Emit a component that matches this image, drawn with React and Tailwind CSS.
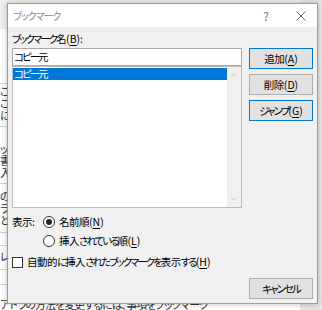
import { ChevronUp, ChevronDown } from 'lucide-react';

const ff = "font-['Noto_Sans_CJK_JP',sans-serif] [font-feature-settings:'palt']";

// かなだけ詰める（Meiryo UI のように仮名が細い）
const J = ({ s, kana = 'tracking-[-2px]', kanji = 'tracking-[-0.5px]' }) => {
    const parts = s.split(/([\u3040-\u30ff]+)/);
    return (
        <>
            {parts.map((p, i) =>
                /[\u3040-\u30ff]/.test(p) ? (
                    <span key={i} className={kana}>{p}</span>
                ) : (
                    <span key={i} className={kanji}>{p}</span>
                )
            )}
        </>
    );
};

const Key = ({ k }) => (
    <>
        (<span className="underline underline-offset-2">{k}</span>)
    </>
);

// 背景のドキュメント（ダイアログの外に少しだけ見える部分）
const docRows = [
    { cls: 'h-[55px]', lines: [] },
    { cls: 'h-[43px] pt-[1px]', lines: ['こ', 'こ', 'に'] },
    { cls: 'h-[57px] pt-[15px]', lines: ['ッ', '書', '入]'] },
    { cls: 'h-[49px] pt-[6px]', lines: ['の', 'ラ', 'と'] },
    { cls: 'h-[13px]', lines: [] },
    { cls: 'h-[24px] pt-[4px]', lines: ['レ'] },
    { cls: 'h-[15px]', lines: [] },
    { cls: 'flex-1 pt-[13px] border-b-0', lines: ['アドラの方法を変更するには、事項をブックマーク'] },
];

const Button = ({ children, primary }) => (
    <div
        className={`w-[64px] h-[21px] flex items-center justify-center text-[10.5px] text-black bg-[#e1e1e1] border ${primary ? 'border-[#0078d7]' : 'border-[#adadad]'}`}
    >
        {children}
    </div>
);

export default function App() {
    return (
        <div className={`relative w-[322px] h-[310px] overflow-hidden bg-[#e6e6e6] ${ff}`}>
            {/* 背景 */}
            <div className="w-[300px] h-full flex flex-col">
                <div className="h-[30px] bg-[#f0f0f0]" />
                <div className="flex-1 bg-white flex flex-col">
                    {docRows.map((row, i) => (
                        <div key={i} className={`${row.cls} border-b border-[#d0d0d0] text-[11px] leading-[12px] text-[#333] overflow-hidden`}>
                            {row.lines.map((t, j) => (
                                <div key={j} className="h-[12px] whitespace-nowrap tracking-[-1px]">{t}</div>
                            ))}
                        </div>
                    ))}
                </div>
            </div>

            {/* ダイアログ */}
            <div className="absolute left-[7px] top-[3px] w-[311px] h-[301px] border border-[#9c9c9c] bg-[#f0f0f0] shadow-[0_0_6px_rgba(0,0,0,0.25)] flex flex-col">
                {/* タイトルバー */}
                <div className="h-[23px] bg-white flex items-center pl-[5px] text-[10px] text-[#8a8a8a]">
                    <span className="flex-1"><J s="ブックマーク" kana="tracking-[-1px]" /></span>
                    <span className="w-[14px] text-center text-[12px] text-[#777]">?</span>
                    <span className="w-[23px]" />
                    <svg width="10" height="10" viewBox="0 0 10 10" className="mr-[11px]">
                        <path d="M0.5 0.5L9.5 9.5M9.5 0.5L0.5 9.5" stroke="#666" strokeWidth="1" />
                    </svg>
                </div>

                {/* 本体 */}
                <div className="flex-1 flex flex-col pl-[4px] pr-[4px] pt-[4px] text-[10.5px] text-black">
                    <div className="h-[16px] leading-[16px]"><J s="ブックマーク名" /><Key k="B" />:</div>
                    <div className="flex gap-[7px] mt-[1px]">
                        <div className="w-[230px] flex flex-col">
                            <div className="h-[18px] border border-[#a8a8a8] bg-white flex items-center pl-[1px] leading-none"><J s="コピー元" /></div>
                            <div className="h-[142px] border border-[#bcbcbc] bg-white flex">
                                <div className="flex-1 pt-[1px]">
                                    <div className="h-[12px] bg-[#0078d7] text-white leading-[12px] pl-[1px]"><J s="コピー元" /></div>
                                </div>
                                <div className="w-[14px] bg-[#f0f0f0] flex flex-col items-center justify-between py-[3px] text-[#a6a6a6]">
                                    <ChevronUp size={10} strokeWidth={1.5} />
                                    <ChevronDown size={10} strokeWidth={1.5} />
                                </div>
                            </div>
                        </div>
                        <div className="flex flex-col gap-[5px]">
                            <Button primary><J s="追加" /><Key k="A" /></Button>
                            <Button><J s="削除" /><Key k="D" /></Button>
                            <Button primary><J s="ジャンプ" /><Key k="G" /></Button>
                        </div>
                    </div>

                    {/* 表示順 */}
                    <div className="flex mt-[4px]">
                        <div className="w-[31px] h-[19px] leading-[19px]"><J s="表示" />:</div>
                        <div className="flex flex-col">
                            <div className="h-[19px] flex items-center gap-[4px]">
                                <span className="w-[12px] h-[12px] rounded-full border border-[#333] bg-white flex items-center justify-center">
                                    <span className="w-[6px] h-[6px] rounded-full bg-[#222]" />
                                </span>
                                <span><J s="名前順" /><Key k="N" /></span>
                            </div>
                            <div className="h-[19px] flex items-center gap-[4px]">
                                <span className="w-[12px] h-[12px] rounded-full border border-[#333] bg-white" />
                                <span><J s="挿入されている順" /><Key k="L" /></span>
                            </div>
                        </div>
                    </div>

                    <div className="flex items-center gap-[4px] mt-[5px] h-[14px]">
                        <span className="w-[11px] h-[11px] border border-[#333] bg-white" />
                        <span><J s="自動的に挿入されたブックマークを表示する" /><Key k="H" /></span>
                    </div>

                    <div className="flex-1 flex items-end justify-end pb-[4px]">
                        <Button><J s="キャンセル" /></Button>
                    </div>
                </div>
            </div>
        </div>
    );
}
